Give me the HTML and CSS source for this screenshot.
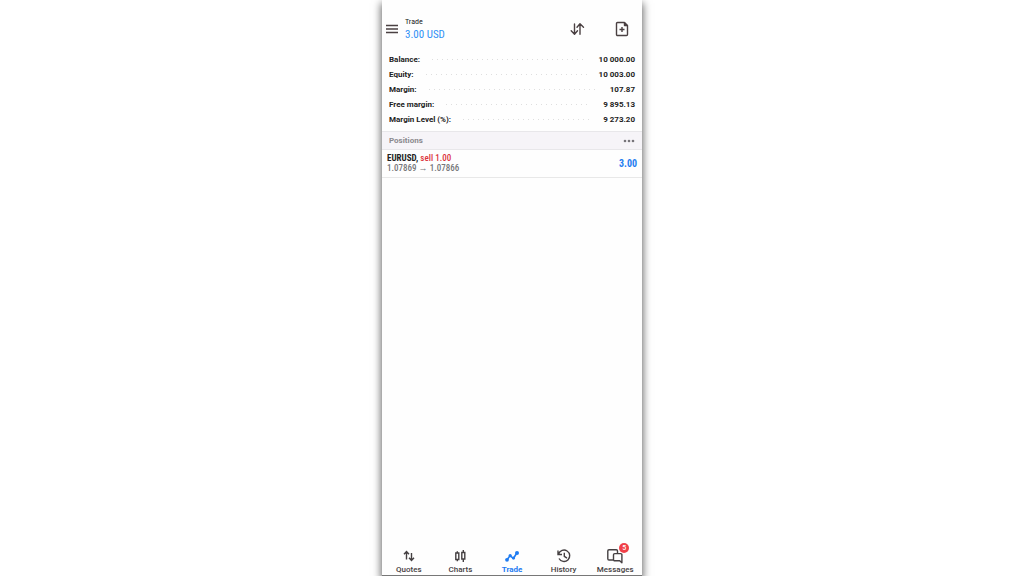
FILE: index.html
```html
<!DOCTYPE html>
<html lang="en">
<head>
  <meta charset="UTF-8">
  <title>Trade</title>
  <meta name="viewport" content="width=device-width, initial-scale=1.0">
  <link rel="stylesheet" href="styles.css">
</head>
<body>
  <div class="phone">
    <header class="topbar">
      <button type="button" class="icon-btn" aria-label="Menu">
        <svg width="12" height="10" viewBox="0 0 12 10" fill="none" stroke="currentColor" stroke-width="1.3"><path d="M0 1.5h12M0 5h12M0 8.5h12"/></svg>
      </button>
      <div class="heading">
        <h1>Trade</h1>
        <p class="profit">3.00 USD</p>
      </div>
      <div class="actions">
        <button type="button" class="icon-btn" aria-label="Sort">
          <svg width="16" height="14" viewBox="0 0 16 14" fill="none" stroke="currentColor" stroke-width="1.4" stroke-linecap="round" stroke-linejoin="round"><path d="M5.500 2v10M2.200 8.800l3.300 3.400 3-3.400M11 12.200V2M8 5.200l3-3.400 3.500 3.400"/></svg>
        </button>
        <button type="button" class="icon-btn" aria-label="New order">
          <svg width="14" height="16" viewBox="0 0 14 16" fill="none" stroke="currentColor" stroke-width="1.4" stroke-linejoin="round"><path d="M2.5 1.500H9L12.500 5v8.500a1 1 0 0 1-1 1h-9a1 1 0 0 1-1-1v-11a1 1 0 0 1 1-1zM7 6v5M4.500 8.500h5"/><path d="M9.500 1.500V4.500h3z" fill="currentColor"/></svg>
        </button>
      </div>
    </header>

    <main>
      <dl class="account">
        <div class="row"><dt>Balance:</dt><dd>10 000.00</dd></div>
        <div class="row"><dt>Equity:</dt><dd>10 003.00</dd></div>
        <div class="row"><dt>Margin:</dt><dd>107.87</dd></div>
        <div class="row"><dt>Free margin:</dt><dd>9 895.13</dd></div>
        <div class="row"><dt>Margin Level (%):</dt><dd>9 273.20</dd></div>
      </dl>

      <div class="section-head">
        <h2>Positions</h2>
        <button type="button" class="icon-btn" aria-label="Position options">
          <svg width="12" height="4" viewBox="0 0 12 4" fill="#77757a"><circle cx="2" cy="2" r="1.3"/><circle cx="6" cy="2" r="1.3"/><circle cx="10" cy="2" r="1.3"/></svg>
        </button>
      </div>

      <div class="position">
        <div>
          <p class="symbol">EURUSD, <span class="sell">sell 1.00</span></p>
          <p class="prices">1.07869 → 1.07866</p>
        </div>
        <strong class="result">3.00</strong>
      </div>
    </main>

    <nav class="tabs">
      <a href="#quotes">
        <svg width="18" height="16" viewBox="0 0 18 16" fill="none" stroke="currentColor" stroke-width="1.4"><path d="M6.500 11.500V3.500M4 6.200l2.500-2.700L9 6.200M11.500 5v7.500M9 9.800l2.500 2.700L14 9.800"/></svg>
        <span>Quotes</span>
      </a>
      <a href="#charts">
        <svg width="18" height="16" viewBox="0 0 18 16" fill="none" stroke="currentColor" stroke-width="1.4"><path d="M4.800 5h3v6.500h-3zM10.800 4.500h3V11h-3zM6.300 3.200V5M6.300 11.500v1.800M12.300 2v2.500M12.300 11v3"/></svg>
        <span>Charts</span>
      </a>
      <a href="#trade" class="active" aria-current="page">
        <svg width="18" height="16" viewBox="0 0 18 16" fill="none" stroke="currentColor" stroke-width="1.6"><path d="M4 11.800l3-4 3.500 2.500L14 4.800"/><g fill="currentColor" stroke="none"><circle cx="4" cy="11.800" r="1.900"/><circle cx="7.200" cy="7.600" r="1.600"/><circle cx="10.500" cy="10" r="1.600"/><circle cx="14" cy="5" r="2"/></g></svg>
        <span>Trade</span>
      </a>
      <a href="#history">
        <svg width="18" height="16" viewBox="0 0 18 16" fill="none" stroke="currentColor" stroke-width="1.4"><path d="M3.600 6A5.700 5.700 0 1 1 4 10.500M3 2.500v4h4M9.300 4.800v3.500l2.700 1.800"/></svg>
        <span>History</span>
      </a>
      <a href="#messages">
        <span class="icon-wrap">
          <svg width="18" height="16" viewBox="0 0 18 16" fill="none" stroke="currentColor" stroke-width="1.4" stroke-linejoin="round"><path d="M7.500 12H3a1.200 1.200 0 0 1-1.200-1.200V3A1.200 1.200 0 0 1 3 1.800h7.300A1.200 1.200 0 0 1 11.500 3v2.500"/><path d="M8.700 5.600h6a1.200 1.200 0 0 1 1.200 1.200v8l-2.200-2H8.700a1.200 1.200 0 0 1-1.200-1.200V6.800a1.200 1.200 0 0 1 1.200-1.200z"/></svg>
          <span class="badge">5</span>
        </span>
        <span>Messages</span>
      </a>
    </nav>
  </div>
</body>
</html>
```
FILE: styles.css
```css
* {
  box-sizing: border-box;
}
body {
  margin: 0;
  background: #fff;
  color: #222;
  font-family: Roboto, "Liberation Sans", sans-serif;
  font-size: 8px;
}
h1, h2, p, dl, dd {
  margin: 0;
  font-size: inherit;
  font-weight: inherit;
}
.phone {
  display: flex;
  flex-direction: column;
  max-width: 260px;
  min-height: 100vh;
  margin: 0 auto;
  background: #fefefe;
  border-bottom: 1px solid #777;
  box-shadow: 0 4px 8px 1px rgba(0, 0, 0, 0.6);
}
main {
  flex: 1;
}
.icon-btn {
  display: flex;
  padding: 0;
  border: none;
  background: none;
  color: #4a4042;
  cursor: pointer;
}
.topbar {
  display: flex;
  align-items: center;
  gap: 7px;
  padding: 15px 13px 8px 4px;
}
.heading, .symbol, .prices, .result {
  font-family: "Roboto Condensed", "Liberation Sans Narrow", Roboto, sans-serif;
}
.heading h1 {
  font-size: 8px;
  line-height: 13px;
}
.profit {
  color: #3090f5;
  font-size: 11px;
  line-height: 14px;
}
.actions {
  display: flex;
  align-items: center;
  gap: 30px;
  margin-left: auto;
}
.account {
  padding: 2px 7px 4px;
  font-weight: bold;
}
.row {
  display: flex;
  align-items: center;
  gap: 12px;
  line-height: 15px;
}
.row::after {
  content: "";
  order: 1;
  flex: 1;
  height: 1px;
  background: repeating-linear-gradient(to right, #dedede 0 1px, transparent 1px 5px);
}
.row dd {
  order: 2;
}
.section-head {
  display: flex;
  align-items: center;
  justify-content: space-between;
  height: 19px;
  padding: 0 7px;
  border-top: 1px solid #e8e7ea;
  border-bottom: 1px solid #e8e7ea;
  background: #f6f4f8;
}
.section-head h2 {
  color: #8b898e;
  font-weight: bold;
}
.position {
  display: flex;
  align-items: center;
  justify-content: space-between;
  padding: 3px 5px 4px;
  border-bottom: 1px solid #e8e8e8;
}
.symbol, .prices {
  font-size: 9px;
  line-height: 10px;
}
.symbol {
  font-weight: bold;
}
.sell {
  color: #dc3540;
  font-weight: 500;
}
.prices {
  color: #77777a;
  font-weight: 500;
}
.result {
  color: #1e7df0;
  font-size: 10px;
}
.tabs {
  display: grid;
  grid-template-columns: repeat(5, 1fr);
  padding: 0 1px;
}
.tabs a {
  display: flex;
  flex-direction: column;
  align-items: center;
  gap: 1px;
  color: #454042;
  font-weight: 500;
  line-height: 10px;
  text-decoration: none;
}
.tabs .active {
  color: #1f7cf2;
  font-weight: bold;
}
.icon-wrap {
  position: relative;
  display: flex;
}
.badge {
  position: absolute;
  top: -5px;
  right: -5px;
  width: 10px;
  border-radius: 50%;
  background: #f04048;
  color: #fff;
  font-size: 7px;
  text-align: center;
}
```
